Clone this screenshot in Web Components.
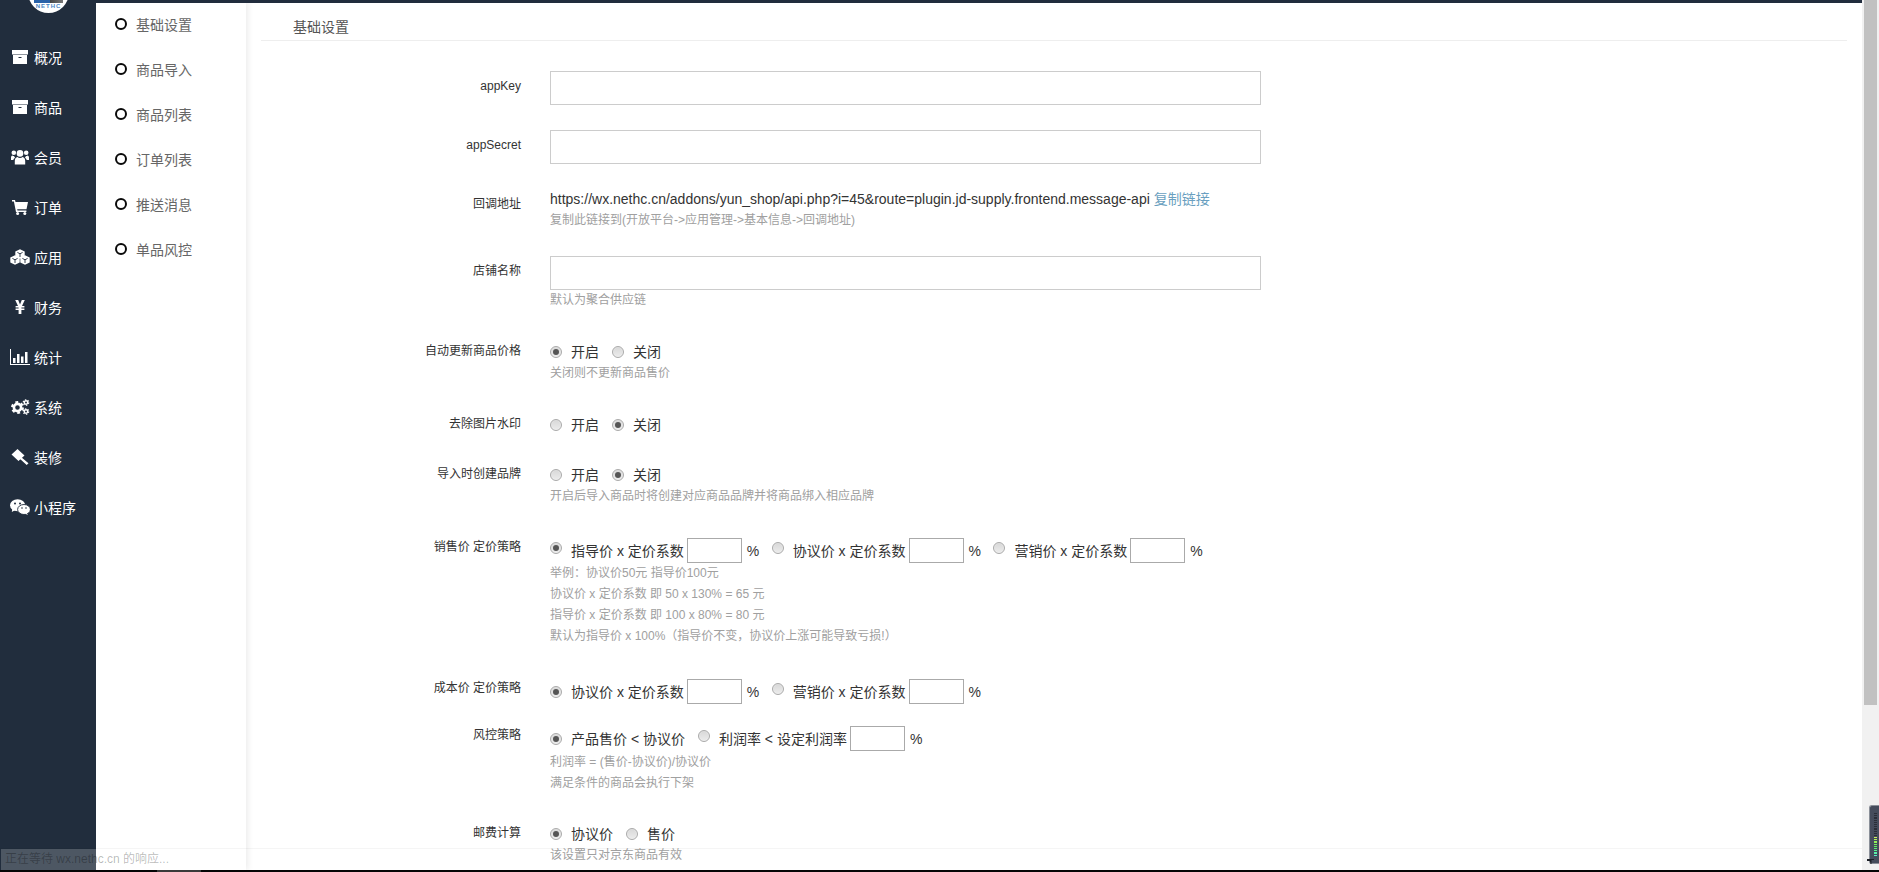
<!doctype html>
<html>
	<head>
		<meta charset="utf-8">
		<title>基础设置</title>
		<style>
			html, body {
				margin: 0;
				height: 872px;
				overflow: hidden;
				background: #000;
				font-family: "Liberation Sans", "Noto Sans CJK SC", sans-serif;
				font-size: 14px;
			}
		</style>
	</head>
	<body>
		<app-shell>
			<side-nav slot="side">
				<nav-item icon="archive">概况</nav-item>
				<nav-item icon="archive">商品</nav-item>
				<nav-item icon="users">会员</nav-item>
				<nav-item icon="cart">订单</nav-item>
				<nav-item icon="cubes">应用</nav-item>
				<nav-item icon="yen">财务</nav-item>
				<nav-item icon="chart">统计</nav-item>
				<nav-item icon="cogs">系统</nav-item>
				<nav-item icon="gavel">装修</nav-item>
				<nav-item icon="wechat">小程序</nav-item>
			</side-nav>
			<sub-nav slot="sub">
				<sub-item>基础设置</sub-item>
				<sub-item>商品导入</sub-item>
				<sub-item>商品列表</sub-item>
				<sub-item>订单列表</sub-item>
				<sub-item>推送消息</sub-item>
				<sub-item>单品风控</sub-item>
			</sub-nav>
			<form-panel heading="基础设置">
				<form-row label="appKey"><text-field></text-field></form-row>
				<form-row label="appSecret"><text-field></text-field></form-row>
				<form-row label="回调地址">
					<url-line href="https://wx.nethc.cn/addons/yun_shop/api.php?i=45&amp;route=plugin.jd-supply.frontend.message-api">复制链接</url-line>
					<help-text>复制此链接到(开放平台-&gt;应用管理-&gt;基本信息-&gt;回调地址)</help-text>
				</form-row>
				<form-row label="店铺名称">
					<text-field></text-field>
					<help-text>默认为聚合供应链</help-text>
				</form-row>
				<form-row label="自动更新商品价格">
					<choice-row><radio-opt checked>开启</radio-opt><radio-opt>关闭</radio-opt></choice-row>
					<help-text>关闭则不更新商品售价</help-text>
				</form-row>
				<form-row label="去除图片水印" style="margin-bottom:23px">
					<choice-row><radio-opt>开启</radio-opt><radio-opt checked>关闭</radio-opt></choice-row>
				</form-row>
				<form-row label="导入时创建品牌">
					<choice-row><radio-opt>开启</radio-opt><radio-opt checked>关闭</radio-opt></choice-row>
					<help-text>开启后导入商品时将创建对应商品品牌并将商品绑入相应品牌</help-text>
				</form-row>
				<form-row label="销售价 定价策略" style="margin-bottom:26px">
					<choice-row style="margin-bottom:0">
						<radio-opt tight checked style="--dy:-3px">指导价 x 定价系数</radio-opt><pct-input></pct-input>
						<radio-opt tight style="--dy:-3px">协议价 x 定价系数</radio-opt><pct-input></pct-input>
						<radio-opt tight style="--dy:-3px">营销价 x 定价系数</radio-opt><pct-input></pct-input>
					</choice-row>
					<help-text>举例：协议价50元 指导价100元</help-text>
					<help-text>协议价 x 定价系数 即 50 x 130% = 65 元</help-text>
					<help-text>指导价 x 定价系数 即 100 x 80% = 80 元</help-text>
					<help-text>默认为指导价 x 100%（指导价不变，协议价上涨可能导致亏损!）</help-text>
				</form-row>
				<form-row label="成本价 定价策略" style="margin-bottom:15px">
					<choice-row>
						<radio-opt tight checked>协议价 x 定价系数</radio-opt><pct-input></pct-input>
						<radio-opt tight style="--dy:-3px">营销价 x 定价系数</radio-opt><pct-input></pct-input>
					</choice-row>
				</form-row>
				<form-row label="风控策略" style="margin-bottom:24px">
					<choice-row>
						<radio-opt checked>产品售价 &lt; 协议价</radio-opt>
						<radio-opt tight style="--dy:-3px">利润率 &lt; 设定利润率</radio-opt><pct-input></pct-input>
					</choice-row>
					<help-text>利润率 = (售价-协议价)/协议价</help-text>
					<help-text>满足条件的商品会执行下架</help-text>
				</form-row>
				<form-row label="邮费计算">
					<choice-row><radio-opt checked>协议价</radio-opt><radio-opt>售价</radio-opt></choice-row>
					<help-text>该设置只对京东商品有效</help-text>
				</form-row>
			</form-panel>
			<status-bubble slot="over">正在等待 wx.nethc.cn 的响应...</status-bubble>
			<level-meter slot="over"></level-meter>
		</app-shell>

		<script type="text/javascript">
			// little helpers for the icons that repeat a shape
			function cube(cx, cy) {
				let r = 4.7, h = 2.6;
				return `<polygon fill="#fff" points="${cx},${cy-r} ${cx+r},${cy-h} ${cx+r},${cy+h} ${cx},${cy+r} ${cx-r},${cy+h} ${cx-r},${cy-h}"/>
				<path fill="none" stroke="#212d3d" stroke-width=".9" d="M${cx-2.6} ${cy-1.6}L${cx} ${cy-.2}L${cx+2.6} ${cy-1.6}M${cx} ${cy-.2}V${cy+3}"/>`;
			}
			function gear(cx, cy, r, w) {
				let dash = (2 * Math.PI * (r + w * .7) / 12).toFixed(2);
				return `<circle cx="${cx}" cy="${cy}" r="${r}" fill="none" stroke="#fff" stroke-width="${w}"/>
				<circle cx="${cx}" cy="${cy}" r="${r + w * .7}" fill="none" stroke="#fff" stroke-width="${w * .8}" stroke-dasharray="${dash}"/>`;
			}

			const ICONS = {
				archive: `<path fill="#fff" fill-rule="evenodd" d="M2 1h16v4.400H2zM3 6h14v9H3zM8.500 8v1h3V8z"/>`,
				users: `<g fill="#fff"><circle cx="10" cy="4.400" r="3.300"/><circle cx="3.800" cy="3.800" r="2.300"/><circle cx="16.200" cy="3.800" r="2.300"/>
					<path d="M4.800 15.500v-3.600c0-2 1-3.700 2.600-3.900.7.6 1.600 1 2.600 1s1.900-.4 2.600-1c1.600.2 2.600 1.900 2.600 3.900v3.600z"/>
					<path d="M1 11V8.600C1 7.400 1.600 6.600 2.400 6.500c.5.4 1 .6 1.700.6.2.7.5 1.200 1 1.600-1 .5-1.600 1.400-1.800 2.300zM19 11V8.600c0-1.200-.6-2-1.400-2.100-.5.4-1 .6-1.700.6-.2.7-.5 1.200-1 1.600 1 .5 1.600 1.400 1.800 2.300z"/></g>`,
				cart: `<g fill="#fff"><path d="M2 1h3l.5 2H18l-1.500 7.200H7.200l.3 1.400H16.400V13H6L3.900 2.500H2z"/><circle cx="7.600" cy="14.400" r="1.500"/><circle cx="14.800" cy="14.400" r="1.500"/></g>`,
				cubes: cube(10, 5) + cube(5, 11) + cube(15, 11),
				yen: `<path fill="#fff" d="M5.200 1h3L10 5.400 11.800 1h3L12 7h2.400v1.500h-3v1.100h3v1.500h-3V15H8.600v-3.900h-3V9.600h3V8.500h-3V7H8z"/>`,
				chart: `<path fill="#fff" d="M0 0h1v15h19v1H0zM3 9h2.500v5H3zM7 5h2.500v9H7zM11 7.500h2.500V14H11zM15 3h2.500v11H15z"/>`,
				cogs: gear(7.5, 8.5, 3.6, 2.6) + gear(16, 3.5, 1.7, 1.5) + gear(16, 12.5, 1.7, 1.5),
				gavel: `<path fill="#fff" d="M7.500 0 14.500 6.500 8.500 12 1.500 5.500zM11 8l7.500 6.200-1.800 1.800L9.500 9.500z"/>`,
				wechat: `<ellipse cx="7.600" cy="6.200" rx="7.600" ry="6" fill="#fff"/><path fill="#fff" d="M2.400 9.500 1.800 13l3.600-2z"/>
					<ellipse cx="14" cy="10.500" rx="6.400" ry="5" fill="#fff" stroke="#212d3d" stroke-width=".9"/><path fill="#fff" d="M16.800 14 18 16l-3.400-1.400z"/>
					<g fill="#212d3d"><circle cx="5" cy="4.400" r="1"/><circle cx="10" cy="4.400" r="1"/><circle cx="12" cy="9" r=".8"/><circle cx="16" cy="9" r=".8"/></g>`
			};

			customElements.define('app-shell', class extends HTMLElement {
				constructor() {
					super();
					this.attachShadow({mode: 'open'}).innerHTML = `
					<style>
						:host { display: flex; flex-direction: column; position: relative; width: 1879px; height: 872px; overflow: hidden; }
						.page { flex: 1; min-height: 0; display: flex; background: #fff; }
						.right { flex: 1; min-width: 0; display: flex; flex-direction: column; }
						.top { height: 3px; background: #212d3d; position: relative; z-index: 2; }
						.cols { flex: 1; min-height: 0; display: flex; }
						.scroll { width: 17px; background: #f1f1f1; padding: 0 2px; box-sizing: border-box; }
						.thumb { height: 705px; background: #c1c1c1; }
						.task { height: 2px; display: flex; background: #050505; }
						.task i { width: 44px; margin-left: 157px; background: #3c3c3c; }
					</style>
					<div class="page">
						<slot name="side"></slot>
						<div class="right">
							<div class="top"></div>
							<div class="cols"><slot name="sub"></slot><slot></slot></div>
						</div>
						<div class="scroll"><div class="thumb"></div></div>
					</div>
					<div class="task"><i></i></div>
					<slot name="over"></slot>`;
				}
			});

			customElements.define('side-nav', class extends HTMLElement {
				constructor() {
					super();
					this.attachShadow({mode: 'open'}).innerHTML = `
					<style>
						:host { display: block; width: 96px; flex: none; background: #212d3d; overflow: hidden; position: relative; z-index: 2; }
						.logo { width: 41px; height: 41px; margin: -28px 0 19px 28px; border-radius: 50%; background: #fff; overflow: hidden;
							display: flex; flex-direction: column; justify-content: flex-end; align-items: center; }
						.band { width: 29px; height: 3px; background: linear-gradient(90deg, #2a62a8 55%, #444 55%, #777); }
						.word { height: 9px; font: 700 6px/7px "Liberation Sans", sans-serif; letter-spacing: 1px; color: #4c86c4; margin-bottom: 1px; }
					</style>
					<div class="logo"><div class="band"></div><div class="word">NETHC</div></div>
					<slot></slot>`;
				}
			});

			customElements.define('nav-item', class extends HTMLElement {
				constructor() {
					super();
					this.attachShadow({mode: 'open'}).innerHTML = `
					<style>
						:host { display: flex; align-items: center; gap: 4px; height: 50px; padding-left: 10px; color: #fff; font-size: 14px; }
						svg { width: 20px; height: 16px; flex: none; }
					</style>
					<svg viewBox="0 0 20 16">${ICONS[this.getAttribute('icon')] || ''}</svg>
					<slot></slot>`;
				}
			});

			customElements.define('sub-nav', class extends HTMLElement {
				constructor() {
					super();
					this.attachShadow({mode: 'open'}).innerHTML = `
					<style>
						:host { display: block; width: 150px; flex: none; margin-top: -2px; background: #fff; box-shadow: 2px 0 6px rgba(0,0,0,.08); position: relative; z-index: 1; }
					</style>
					<slot></slot>`;
				}
			});

			customElements.define('sub-item', class extends HTMLElement {
				constructor() {
					super();
					this.attachShadow({mode: 'open'}).innerHTML = `
					<style>
						:host { display: flex; align-items: center; gap: 9px; height: 45px; padding-left: 19px; color: #666; font-size: 14px; }
						i { width: 8px; height: 8px; border: 2px solid #0a0a0a; border-radius: 50%; flex: none; }
					</style>
					<i></i><slot></slot>`;
				}
			});

			customElements.define('form-panel', class extends HTMLElement {
				constructor() {
					super();
					this.attachShadow({mode: 'open'}).innerHTML = `
					<style>
						:host { display: block; flex: 1; min-width: 0; padding: 0 15px; background: #fff; overflow: hidden; }
						h2 { margin: 0 0 30px; height: 37px; box-sizing: content-box; padding-left: 32px; border-bottom: 1px solid #eee;
							font: 400 14px/20px "Liberation Sans", "Noto Sans CJK SC", sans-serif; color: #555; }
						h2 span { display: block; padding-top: 14px; }
					</style>
					<h2><span>${this.getAttribute('heading')}</span></h2>
					<slot></slot>`;
				}
			});

			customElements.define('form-row', class extends HTMLElement {
				constructor() {
					super();
					this.attachShadow({mode: 'open'}).innerHTML = `
					<style>
						:host { display: grid; grid-template-columns: 260px 711px; column-gap: 29px; margin-bottom: 25px; }
						label { padding-top: 7px; text-align: right; font-size: 12px; line-height: 17px; color: #333; }
						.ctl { min-width: 0; }
					</style>
					<label>${this.getAttribute('label')}</label>
					<div class="ctl"><slot></slot></div>`;
				}
			});

			customElements.define('text-field', class extends HTMLElement {
				constructor() {
					super();
					this.attachShadow({mode: 'open'}).innerHTML = `
					<style>
						:host { display: block; }
						input { display: block; box-sizing: border-box; width: 100%; height: 34px; margin: 0; padding: 0 8px; border: 1px solid #ccc; background: #fff; outline: 0; }
					</style>
					<input type="text">`;
				}
			});

			customElements.define('url-line', class extends HTMLElement {
				constructor() {
					super();
					this.attachShadow({mode: 'open'}).innerHTML = `
					<style>
						:host { display: block; font-size: 14px; line-height: 21px; color: #333; white-space: nowrap; }
						a { color: #6a9fc0; text-decoration: none; }
					</style>
					${this.getAttribute('href').replace(/&/g, '&amp;')} <a href="#"><slot></slot></a>`;
				}
			});

			customElements.define('help-text', class extends HTMLElement {
				constructor() {
					super();
					this.attachShadow({mode: 'open'}).innerHTML = `
					<style>
						:host { display: block; font-size: 12px; line-height: 21px; color: #a0a0a0; white-space: nowrap; }
					</style>
					<slot></slot>`;
				}
			});

			customElements.define('choice-row', class extends HTMLElement {
				constructor() {
					super();
					this.attachShadow({mode: 'open'}).innerHTML = `
					<style>
						:host { display: flex; align-items: center; min-height: 20px; margin: 6px 0 1px; white-space: nowrap; }
					</style>
					<slot></slot>`;
				}
			});

			customElements.define('radio-opt', class extends HTMLElement {
				constructor() {
					super();
					let on = this.hasAttribute('checked');
					this.attachShadow({mode: 'open'}).innerHTML = `
					<style>
						:host { display: inline-flex; align-items: center; gap: 9px; margin-right: 13px; font-size: 14px; line-height: 20px; color: #333; }
						:host([tight]) { margin-right: 3px; }
						i { box-sizing: border-box; width: 12px; height: 12px; flex: none; border-radius: 50%; border: 1px solid #aaa;
							background: linear-gradient(#d8d8d8, #ececec); box-shadow: inset 0 0 1px #fff;
							display: flex; align-items: center; justify-content: center; transform: translateY(var(--dy, 0)); }
						b { width: 6px; height: 6px; border-radius: 50%; background: #555; }
					</style>
					<i>${on ? '<b></b>' : ''}</i><span><slot></slot></span>`;
				}
			});

			customElements.define('pct-input', class extends HTMLElement {
				constructor() {
					super();
					this.attachShadow({mode: 'open'}).innerHTML = `
					<style>
						:host { display: inline-flex; align-items: center; gap: 5px; margin-right: 12.5px; font-size: 14px; color: #333; }
						input { box-sizing: border-box; width: 55px; height: 25px; margin: 0; padding: 0 4px; border: 1px solid #aaa; background: #fff; outline: 0; }
					</style>
					<input type="text"><span>%</span>`;
				}
			});

			customElements.define('status-bubble', class extends HTMLElement {
				constructor() {
					super();
					this.attachShadow({mode: 'open'}).innerHTML = `
					<style>
						:host { position: absolute; left: 0; right: 17px; bottom: 2px; height: 21px; border-top: 1px solid rgba(0,0,0,.04); z-index: 5; }
						div { display: inline-block; height: 21px; margin-left: 1px; padding: 0 2px 0 4px; background: rgba(255,255,255,.2);
							font-size: 12px; line-height: 21px; color: rgba(0,0,0,.28); white-space: nowrap; }
					</style>
					<div><slot></slot></div>`;
				}
			});

			customElements.define('level-meter', class extends HTMLElement {
				constructor() {
					super();
					let leds = '';
					for (let i = 0; i < 20; i++) {
						// top of the scale is unlit, the lit part runs from yellow-green down to teal
						let c = '#2a2e38';
						if (i > 10) c = `hsl(${75 + (i - 11) * 11}, 85%, 65%)`;
						leds += `<i style="background:${c}"></i>`;
					}
					this.attachShadow({mode: 'open'}).innerHTML = `
					<style>
						:host { position: absolute; right: 0; bottom: 8px; width: 10px; height: 59px; box-sizing: border-box; padding: 7px 2px 0 4px;
							background: #454c5c; border: 1px solid #8a8f98; border-right: 0; border-radius: 3px 0 0 3px; z-index: 6; }
						div { display: flex; flex-direction: column; gap: 1px; }
						i { display: block; height: 1.2px; }
						svg { position: absolute; left: -3px; bottom: -1px; width: 7px; height: 5px; }
					</style>
					<div>${leds}</div>
					<svg viewBox="0 0 7 5"><path fill="#1c1f26" d="M0 0h7v1H4.500v4H3.500L3 2H0z"/></svg>`;
				}
			});
		</script>
	</body>
</html>
